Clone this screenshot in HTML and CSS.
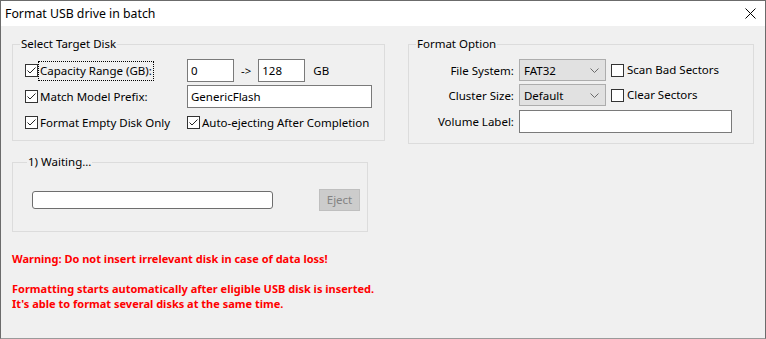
FILE: index.html
```html
<!DOCTYPE html>
<html>
<head>
<meta charset="utf-8">
<link rel="stylesheet" href="styles.css">
</head>
<body>
<div class="window">
  <div class="titlebar">
    <span class="title">Format USB drive in batch</span>
    <svg class="close" width="11" height="11" viewBox="0 0 11 11"><path d="M0.5 0.5 L10.5 10.5 M10.5 0.5 L0.5 10.5" stroke="#000" stroke-width="1" fill="none"/></svg>
  </div>
  <div class="content">
    <div class="top-row">
      <fieldset class="group group-target">
        <legend>Select Target Disk</legend>
        <div class="target-grid">
          <label class="check"><span class="box"><svg width="11" height="11" viewBox="0 0 11 11"><path d="M1.5 5.5 L4 8 L9.5 2.5" stroke="#222" stroke-width="1" fill="none"/></svg></span><span class="focus">Capacity Range (GB):</span></label>
          <div class="range"><span class="field w47">0</span><span class="arrow">-&gt;</span><span class="field w47">128</span><span class="unit">GB</span></div>
          <label class="check"><span class="box"><svg width="11" height="11" viewBox="0 0 11 11"><path d="M1.5 5.5 L4 8 L9.5 2.5" stroke="#222" stroke-width="1" fill="none"/></svg></span><span>Match Model Prefix:</span></label>
          <div class="range"><span class="field w185">GenericFlash</span></div>
          <label class="check"><span class="box"><svg width="11" height="11" viewBox="0 0 11 11"><path d="M1.5 5.5 L4 8 L9.5 2.5" stroke="#222" stroke-width="1" fill="none"/></svg></span><span>Format Empty Disk Only</span></label>
          <label class="check"><span class="box"><svg width="11" height="11" viewBox="0 0 11 11"><path d="M1.5 5.5 L4 8 L9.5 2.5" stroke="#222" stroke-width="1" fill="none"/></svg></span><span>Auto-ejecting After Completion</span></label>
        </div>
      </fieldset>
      <fieldset class="group group-format">
        <legend>Format Option</legend>
        <div class="format-grid">
          <span class="lbl">File System:</span>
          <span class="select">FAT32<svg class="chev" width="9" height="5" viewBox="0 0 9 5"><path d="M0.5 0.5 L4.5 4.5 L8.5 0.5" stroke="#6a6a6a" stroke-width="1" fill="none"/></svg></span>
          <label class="check"><span class="box"></span><span>Scan Bad Sectors</span></label>
          <span class="lbl">Cluster Size:</span>
          <span class="select">Default<svg class="chev" width="9" height="5" viewBox="0 0 9 5"><path d="M0.5 0.5 L4.5 4.5 L8.5 0.5" stroke="#6a6a6a" stroke-width="1" fill="none"/></svg></span>
          <label class="check"><span class="box"></span><span>Clear Sectors</span></label>
          <span class="lbl lbl-last">Volume Label:</span>
          <span class="field volume"></span>
        </div>
      </fieldset>
    </div>
    <fieldset class="group group-wait">
      <legend>1) Waiting...</legend>
      <div class="wait-row">
        <div class="progress"></div>
        <span class="eject">Eject</span>
      </div>
    </fieldset>
    <div class="warn">
      <p>Warning: Do not insert irrelevant disk in case of data loss!</p>
      <p class="gap">Formatting starts automatically after eligible USB disk is inserted.<br>It's able to format several disks at the same time.</p>
    </div>
  </div>
</div>
</body>
</html>
```

FILE: styles.css
```css
html, body {
  margin: 0;
  padding: 0;
  background: #f0f0f0;
}

.window {
  width: 766px;
  height: 339px;
  box-sizing: border-box;
  border: 1px solid #6b6b6b;
  border-bottom-color: #9a9a9a;
  background: #f0f0f0;
  font-family: "Noto Sans", sans-serif;
  font-size: 11.5px;
  color: #000;
  display: flex;
  flex-direction: column;
  overflow: hidden;
}

.titlebar {
  height: 25px;
  flex: none;
  background: #fff;
  display: flex;
  align-items: center;
  justify-content: space-between;
  padding: 0 9px 0 4px;
}

.title {
  font-size: 12.3px;
  line-height: 16px;
}

.close {
  display: block;
  margin-top: -1px;
}

.content {
  padding: 10px 11px 0 11px;
}

.top-row {
  display: flex;
  align-items: flex-start;
  gap: 23px;
}

.group {
  margin: 0;
  border: 1px solid #dcdcdc;
  padding: 7px 12px 6px 12px;
  min-width: 0;
}

.group legend {
  padding: 0 1px;
  margin-left: -5px;
  line-height: 16px;
  font-size: 11.5px;
}

.group-target {
  width: 374px;
  box-sizing: border-box;
}

.group-format {
  width: 347px;
  box-sizing: border-box;
  padding-bottom: 10px;
}

.target-grid {
  display: grid;
  grid-template-columns: 162px auto;
  grid-template-rows: 23px 23px 23px;
  row-gap: 3px;
  align-items: center;
}

.check {
  display: flex;
  align-items: center;
  gap: 2px;
  line-height: 16px;
  white-space: nowrap;
}

.box {
  width: 11px;
  height: 11px;
  border: 1px solid #333;
  background: #fff;
  flex: none;
  display: flex;
}

.box svg {
  display: block;
}

.focus {
  outline: 1px dotted #000;
  outline-offset: 0;
  padding: 1px 1px;
  margin-left: -1px;
}

.range {
  display: flex;
  align-items: center;
  height: 23px;
}

.field {
  display: block;
  box-sizing: border-box;
  height: 23px;
  line-height: 21px;
  border: 1px solid #7a7a7a;
  background: #fff;
  padding-left: 3px;
  white-space: nowrap;
}

.w47 { width: 47px; }
.w185 { width: 185px; }

.arrow {
  margin: 0 7px 0 7px;
}

.unit {
  margin-left: 8px;
}

.format-grid {
  display: grid;
  grid-template-columns: 93px 87px auto;
  grid-template-rows: 22px 22px 24px;
  column-gap: 5px;
  row-gap: 3px;
  align-items: center;
}

.format-grid .check {
  margin-left: 0;
  gap: 3px;
}

.lbl {
  text-align: right;
  white-space: nowrap;
}

.lbl-last {
  align-self: end;
  line-height: 23px;
}

.select {
  box-sizing: border-box;
  height: 22px;
  border: 1px solid #adadad;
  background: #e1e1e1;
  display: flex;
  align-items: center;
  justify-content: space-between;
  padding: 1px 6px 0 4px;
  line-height: 20px;
}

.chev {
  display: block;
}

.volume {
  grid-column: 2 / 4;
  width: 213px;
  align-self: end;
}

.group-wait {
  width: 356px;
  box-sizing: border-box;
  margin-top: 10px;
  padding: 19px 7px 20px 19px;
}

.wait-row {
  display: flex;
  align-items: center;
  justify-content: space-between;
  height: 22px;
}

.progress {
  width: 241px;
  height: 18px;
  box-sizing: border-box;
  border: 1px solid #6e6e6e;
  border-radius: 3px;
  background: #fff;
}

.eject {
  box-sizing: border-box;
  width: 41px;
  height: 22px;
  background: #cccccc;
  border: 1px solid #bfbfbf;
  color: #838383;
  text-align: center;
  line-height: 20px;
}

.warn {
  margin-top: 19px;
  color: #ff0000;
  font-weight: bold;
  font-size: 11px;
  line-height: 15px;
}

.warn p {
  margin: 0;
}

.warn .gap {
  margin-top: 15px;
}
```
